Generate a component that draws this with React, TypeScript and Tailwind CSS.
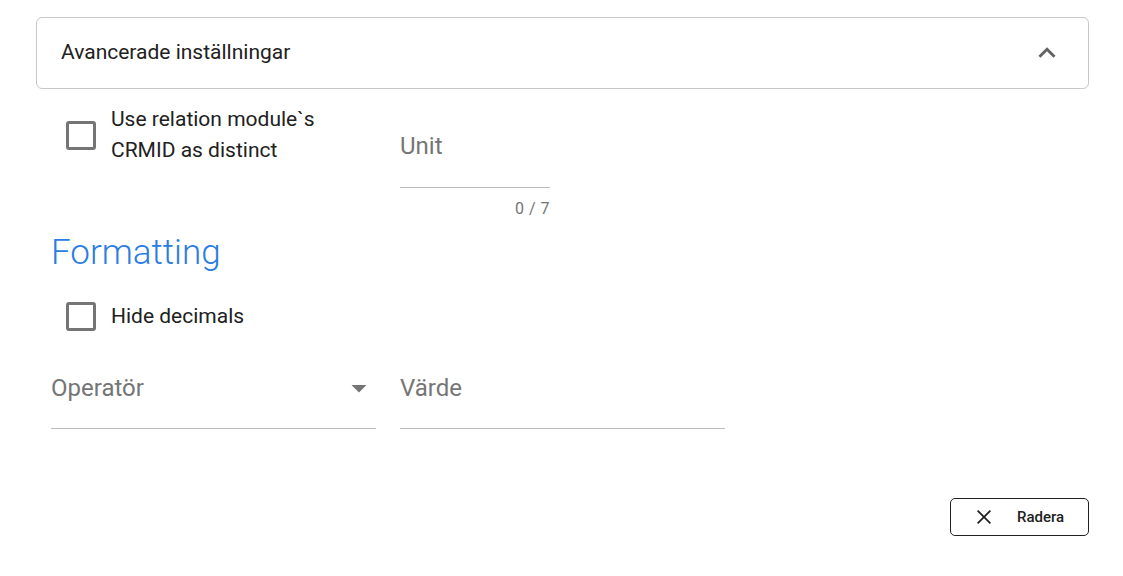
import React from 'react';

function Checkbox({ label }: { label: React.ReactNode }) {
  return (
    <label className="flex items-center pl-[15px] cursor-pointer">
      <span className="w-[30px] h-[29px] shrink-0 rounded-[3px] border-[3px] border-[#757575] bg-white" />
      <span className="ml-[15px] text-[21px] leading-[31px] text-[#212121]">{label}</span>
    </label>
  );
}

function TextField({ label, width, height }: { label: string; width: string; height: string }) {
  return (
    <div className={`${width} ${height} flex items-center border-b border-[#bdbdbd]`}>
      <span className="text-[24px] text-[#757575]">{label}</span>
    </div>
  );
}

export default function App() {
  return (
    <div className="min-h-screen bg-white pl-[36px] pr-[34px] pt-[17px] font-['Roboto',sans-serif] text-[#212121]">
      {/* Expansion panel header */}
      <div className="h-[72px] flex items-center justify-between rounded-[6px] border border-[#c8c8c8] pl-[24px] pr-[24px]">
        <span className="text-[21px] text-[#212121]">Avancerade inställningar</span>
        <svg width="34" height="34" viewBox="0 0 24 24" fill="#616161" aria-hidden="true">
          <path d="M12 8l-6 6 1.41 1.41L12 10.83l4.59 4.58L18 14z" />
        </svg>
      </div>

      <div className="pl-[15px]">
        {/* Row 1 */}
        <div className="mt-[15px] flex gap-[24px]">
          <div className="w-[325px]">
            <Checkbox
              label={
                <>
                  Use relation module`s
                  <br />
                  CRMID as distinct
                </>
              }
            />
          </div>
          <div className="w-[150px]">
            <TextField label="Unit" width="w-[150px]" height="h-[84px]" />
            <div className="mt-[11px] text-right text-[16px] leading-[20px] tracking-[0.03em] text-[#757575]">0 / 7</div>
          </div>
        </div>

        {/* Formatting */}
        <h2 className="mt-[14px] text-[35px] leading-[40px] font-light text-[#2a7de1]">Formatting</h2>

        <div className="mt-[28px]">
          <Checkbox label="Hide decimals" />
        </div>

        {/* Operator / value */}
        <div className="mt-[15px] flex gap-[24px]">
          <div className="w-[325px] h-[82px] flex items-center justify-between border-b border-[#bdbdbd]">
            <span className="text-[24px] text-[#757575]">Operatör</span>
            <svg width="36" height="36" viewBox="0 0 24 24" fill="#757575" aria-hidden="true" className="-mr-[1px]">
              <path d="M7 10l5 5 5-5z" />
            </svg>
          </div>
          <TextField label="Värde" width="w-[325px]" height="h-[82px]" />
        </div>
      </div>

      {/* Footer */}
      <div className="mt-[69px] flex justify-end">
        <button className="w-[139px] h-[38px] flex items-center rounded-[5px] border border-[#212121] bg-white pl-[26px]">
          <svg width="14" height="14" viewBox="0 0 14 14" stroke="#212121" strokeWidth="1.8" aria-hidden="true">
            <line x1="0.6" y1="0.6" x2="13.4" y2="13.4" />
            <line x1="13.4" y1="0.6" x2="0.6" y2="13.4" />
          </svg>
          <span className="ml-[26px] text-[15px] font-medium text-[#212121]">Radera</span>
        </button>
      </div>
    </div>
  );
}
